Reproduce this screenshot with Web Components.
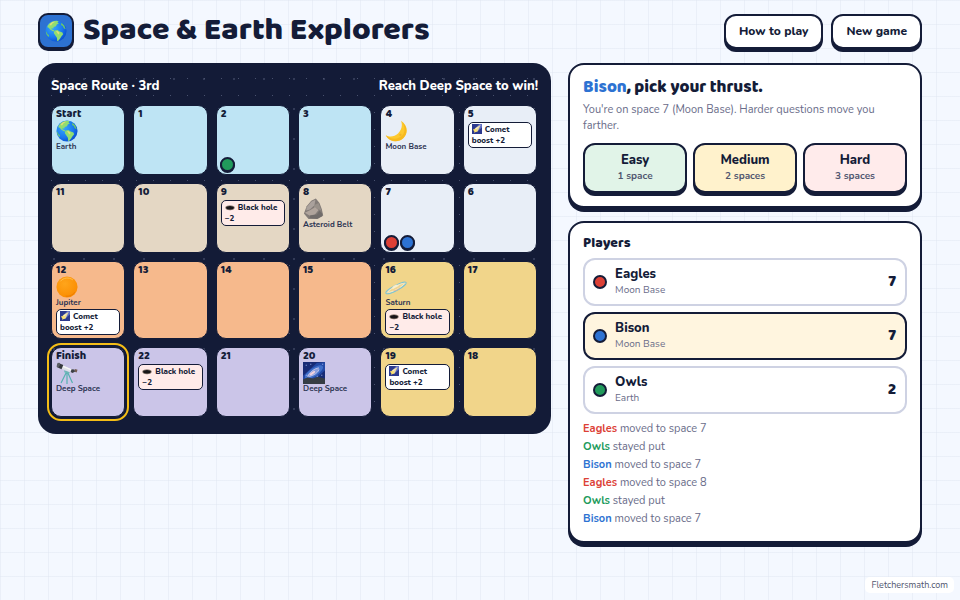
<!DOCTYPE html>
<html lang="en">
<head>
<meta charset="utf-8">
<meta name="viewport" content="width=device-width, initial-scale=1">
<title>Space &amp; Earth Explorers</title>
<style>
  :root {
    --ink: #141c38; --muted: #696c89; --line: #ced2e3;
    --red: #dc4036; --blue: #2d72d2; --green: #219a5b;
    --display: "Baloo 2", "Noto Sans", sans-serif;
    --body: Nunito, Lato, sans-serif;
  }
  body {
    margin: 0; min-height: 100vh; color: var(--ink); font-family: var(--body);
    background:
      linear-gradient(#dfe6f177 1px, transparent 1px) 0 0 / 24px 24px,
      linear-gradient(90deg, #dfe6f177 1px, transparent 1px) 0 0 / 24px 24px,
      #f4f8ff;
  }
</style>
</head>
<body>
<explorer-game></explorer-game>
<script>
const define = (name, html, setup) => {
  const template = document.createElement('template');
  template.innerHTML = `<style>*{box-sizing:border-box}:host{display:block;box-sizing:border-box}</style>${html}`;
  customElements.define(name, class extends HTMLElement {
    constructor() {
      super();
      this.attachShadow({ mode: 'open' }).append(template.content.cloneNode(true));
    }
    connectedCallback() { if (setup) setup(this, this.shadowRoot); }
  });
};

const art = {
  earth: `<defs><radialGradient id="e" cx=".35" cy=".35" r=".7"><stop offset="0" stop-color="#35a8fb"/><stop offset=".65" stop-color="#1a78ee"/><stop offset="1" stop-color="#0a4fd0"/></radialGradient></defs>
    <circle cx="12" cy="12" r="11.5" fill="url(#e)"/>
    <path fill="#8fdd72" d="M3 6C5 2.500 9 .6 13 .7l2 .8-1.500 1 1.500 1.200-2.200 1.200-.8 2-2.500.8-.5 1.500-2-.3.3 1.500 2 .4 1 1.600-1.500-.2L6 10.500 4 8.500 2.500 8zM10.500 11.500l3-.5 2.500 1.600 3 1 .8 1.900-2 2.500-1.300 2.300-2.200 2.500h-1l-.3-3.500-1.700-2.500-1.800-2.500z"/>
    <path fill="#e4dd75" d="M5 4.500l3-2.200 3-.4-3 2-1.500 2.500zM12 12l2 .3 2 2-1.500 1.500z"/><path fill="#6dc767" d="M18 3l3 3 1.500 4-2-1-1-2.500-2-1zM1 12l1.500 3 2 2-.5 1.500C2 17 1 15 1 12z"/>`,
  moon: `<path fill="#fdc92f" d="M17.500.7c7 4.500 8.300 13.500 2.700 18.900-5.700 5.400-15.600 4.600-19.400-3.100 3.700 2.200 9.700 1.900 13.400-1.800C18 11 19.500 6.200 17.500.7z"/><path fill="#f4b015" d="M1 16.700c5.500 5.200 14.700 4.800 18.600-.9 2.800-4.200 1.700-9.500-.7-13.700 5.700 4.700 6 12.800 1.300 17.500C14.500 25.100 4.500 24.300 1 16.700z" opacity=".65"/><circle cx="16.800" cy="16.200" r="1.300" fill="#f1b629"/>`,
  rock: `<path fill="#837c78" d="M1 17l3-8L9 3l5-2.500 4 5L20.500 12l1.500 7-6 4H6z"/><path fill="#aaa19c" d="M4 10L9 4l4.500-2-1 6-5 4.500-4 1z"/><path fill="#989089" d="M12.500 7.500l4.500-2 3 8-4-1.500-4-1.500z"/><path fill="#b0a49c" d="M2 16l6-3 5-3 4 3-4 5-6 1z"/><path fill="#716c6a" d="M8 19l7-1 3-4 3 3 0 3-6 2.500-8-1z"/>`,
  jupiter: `<defs><radialGradient id="j" cx=".4" cy=".35" r=".7"><stop offset="0" stop-color="#ffa51b"/><stop offset="1" stop-color="#fb8c00"/></radialGradient></defs><circle cx="12" cy="12" r="11.500" fill="url(#j)"/><path d="M5 5.500C8 1.800 14 1 18 4" stroke="#ffc152" stroke-width="1" fill="none" stroke-linecap="round"/><path d="M20.500 17.500c-2 3.500-6 5-10 4.500" stroke="#ec7b00" stroke-width="1" fill="none"/>`,
  saturn: `<g transform="rotate(-28 12 13)"><ellipse cx="12" cy="13" rx="12.500" ry="2.800" fill="#f0deb0" stroke="#7dc4d2" stroke-width="1"/><ellipse cx="12" cy="13" rx="9.500" ry="1.700" fill="#f1d58a" stroke="#f3ead0" stroke-width=".8"/><path d="M8 12.500c0-3.500 7.500-3.500 8 0z" fill="#f8edd0"/><path d="M7.800 14c2.500 1.400 6 1.400 8.400 0-1.500 3-6.500 3-8.400 0z" fill="#f2b193"/><path d="M1 14.500c3 2 18 2 22-.2" fill="none" stroke="#7dc4d2" stroke-width=".8"/></g>`,
  telescope: `<path d="M11.500 11L5.500 23M12.500 11l5.500 12M12 11v13" stroke="#55b1b1" stroke-width="1.300"/><path d="M9 9l6 2.200-1 2-5-2z" fill="#6bb7b7"/><path d="M7 3.500l10 4.500-1.500 3L5 7z" fill="#dfe2e8"/><path d="M7 3.500l10 4.500-.5 1.300L6 5z" fill="#f7f7f7"/><path d="M2 .8l6 2.500L6 8 .8 5.500z" fill="#36393e"/><ellipse cx="2.600" cy="3.300" rx="1.600" ry="2.600" transform="rotate(24 2.600 3.300)" fill="#5b5f66"/><path d="M17 8l3 .3 1 2-3 1.700-2-1z" fill="#3c4045"/><path d="M20.500 7.500l3 1-1 3-2-.8z" fill="#745c51"/>`,
  galaxy: `<path fill="#172b75" d="M0 0h24v24H0z"/><path fill="#2349a5" d="M0 15L15 1l9-1v9L10 22H0z"/><g transform="rotate(-34 12 11)"><ellipse cx="12" cy="11" rx="11.500" ry="4.500" fill="#3f6fc9"/><ellipse cx="11" cy="11" rx="8" ry="2.500" fill="#8c9fdc"/><path d="M4 11q8-4 15-1M5 12q8 3 13 0" fill="none" stroke="#c9c9ee" stroke-width=".8"/><ellipse cx="10" cy="11" rx="3.500" ry="1.200" fill="#f3d2dc"/></g><path fill="#353c44" d="M0 19l5-2 6 1 5-2 8 2v6H0z"/><path fill="#a9c0f7" d="M3 3h1v1H3zM8 2h1v1H8zM20 14h1v1h-1zM3 14h1v1H3zM15 15h1v1h-1zM21 2h1v1h-1z"/>`,
  comet: `<path fill="#2c398e" d="M0 0h24v24H0z"/><path fill="#6270c5" d="M24 0v8L13 18 6 13 17 0z"/><path fill="#e8d7a1" d="M21 2L14 17l-6 2-3-3 2-6z"/><path fill="#ffe26b" d="M4 12l4 1 4-3-1 5 3 3-5 .5-3 3-.5-4.500-3-2.500z"/><path fill="#fff8cb" d="M18 5l-7 7-2-1z"/>`,
  hole: `<ellipse cx="12" cy="14" rx="11" ry="5.500" fill="#74655c"/><ellipse cx="12" cy="13" rx="10.500" ry="4.500" fill="#ad9b8f"/><ellipse cx="12" cy="13.800" rx="9.500" ry="4" fill="#171518"/>`
};

define('sky-icon', `<style>:host{width:var(--icon-size,22px);height:var(--icon-size,22px)}svg{display:block;width:100%;height:100%}</style><span></span>`, (el, root) => {
  root.querySelector('span').innerHTML = `<svg viewBox="0 0 24 24" aria-hidden="true">${art[el.getAttribute('name')]}</svg>`;
});

define('event-chip', `<style>
  :host{margin-top:2px;border:1px solid var(--ink);border-radius:5px;padding:1px 3px;background:#fff;font-size:8px;line-height:11px;font-weight:800}
  :host([kind=hole]){background:#ffebe9}
  sky-icon{display:inline-block;--icon-size:10px;vertical-align:-2px;margin-right:3px}
  </style><span></span><slot></slot>`, (el, root) => {
  root.querySelector('span').innerHTML = `<sky-icon name="${el.getAttribute('kind')}"></sky-icon>`;
});

define('team-token', `<style>
  :host{width:14px;height:14px;border:2px solid var(--ink);border-radius:50%;background:var(--red);flex:none}
  :host([team=Bison]){background:var(--blue)}:host([team=Owls]){background:var(--green)}
  :host([raised]){width:15px;height:15px;box-shadow:0 1px 0 var(--ink)}
  </style>`);

define('board-space', `<style>
  :host{position:relative;min-height:70px;border:1px solid #131b37;border-radius:10px;background:var(--zone);padding:3px 4px}
  b{display:block;font:800 11px/11px var(--display)}
  small{display:block;font-size:8px;line-height:9px;font-weight:700;color:#2c3453}
  .tokens{position:absolute;left:3px;bottom:2px;display:flex;gap:1px}
  :host([finish]){outline:2px solid #f4bd16;outline-offset:2px}
  </style><b></b><div class="place"></div><slot></slot><div class="tokens"><slot name="token"></slot></div>`, (el, root) => {
  root.querySelector('b').textContent = el.getAttribute('label');
  const place = el.getAttribute('place');
  if (place) root.querySelector('.place').innerHTML = `<sky-icon name="${el.getAttribute('icon')}"></sky-icon><small>${place}</small>`;
});

const zones = { earth: '#bee4f4', moon: '#e8eef7', rock: '#e4d7c4', jup: '#f6b98c', sat: '#f1d58a', deep: '#cbc5e8' };
const C = '<event-chip kind="comet">Comet boost +2</event-chip>', H = '<event-chip kind="hole">Black hole −2</event-chip>';
const token = t => `<team-token slot="token" team="${t}" raised></team-token>`;
const spaces = [
  ['Start','earth','earth','Earth'],['1','earth'],['2','earth','','',token('Owls')],['3','earth'],['4','moon','moon','Moon Base'],['5','moon','','',C],
  ['11','rock'],['10','rock'],['9','rock','','',H],['8','rock','rock','Asteroid Belt'],['7','moon','','',token('Eagles')+token('Bison')],['6','moon'],
  ['12','jup','jupiter','Jupiter',C],['13','jup'],['14','jup'],['15','jup'],['16','sat','saturn','Saturn',H],['17','sat'],
  ['Finish','deep','telescope','Deep Space'],['22','deep','','',H],['21','deep'],['20','deep','galaxy','Deep Space'],['19','sat','','',C],['18','sat']
];

define('route-board', `<style>
  :host{border-radius:18px;padding:14px 13px 17px;
    background:
      radial-gradient(circle,#48516e 0 .5px,transparent 1px) 9px 10px/17px 17px content-box,
      radial-gradient(circle,#48516e 0 .5px,transparent 1px) 18px 17px/30px 30px content-box,
      #131b37}
  header{display:flex;justify-content:space-between;color:#fff;font-size:13px;line-height:18px;font-weight:800;margin-bottom:10px}
  .grid{display:grid;grid-template-columns:repeat(6,minmax(0,1fr));gap:8px;margin-right:1px}
  </style><header><span>Space Route · 3rd</span><span>Reach Deep Space to win!</span></header><div class="grid"></div>`, (el, root) => {
  root.querySelector('.grid').innerHTML = spaces.map(([n, z, icon, place, extra]) =>
    `<board-space label="${n}" style="--zone:${zones[z]}" ${place ? `icon="${icon}" place="${place}"` : ''} ${n === 'Finish' ? 'finish' : ''}>${extra || ''}</board-space>`).join('');
});

define('game-header', `<style>
  :host{display:flex;align-items:center;gap:9px}
  .logo{width:36px;height:36px;border:2px solid var(--ink);border-radius:10px;background:#2d72d2;display:grid;place-items:center;box-shadow:0 2px 0 var(--ink)}
  h1{margin:0;font:800 32px/36px var(--display);flex:1}
  nav{display:flex;gap:8px}
  button{height:35px;padding:0 13px;border:2px solid var(--ink);border-radius:12px;background:#fff;color:var(--ink);font:800 12px/18px var(--body);box-shadow:0 3px 0 var(--ink)}
  </style><div class="logo"><sky-icon name="earth"></sky-icon></div><h1>Space &amp; Earth Explorers</h1>
  <nav><button type="button">How to play</button><button type="button">New game</button></nav>`);

define('game-card', `<style>:host{border:2px solid var(--ink);border-radius:16px;background:#fff;padding:13px;box-shadow:0 4px 0 var(--ink)}</style><slot></slot>`);

define('thrust-picker', `<style>
  h2{margin:0;font:800 17px/20px var(--display)} h2 span{color:var(--blue)}
  p{margin:4px 0 9px;font-size:11px;line-height:16px;color:var(--muted)}
  div{display:grid;grid-template-columns:repeat(3,1fr);gap:6px}
  button{height:50px;padding:0;border:2px solid var(--ink);border-radius:12px;color:var(--ink);font:800 13px/16px var(--body);box-shadow:0 3px 0 var(--ink)}
  small{display:block;font-size:10px;line-height:16px;font-weight:700;color:#50566f}
  .easy{background:#e1f4e8}.medium{background:#fff2cc}.hard{background:#ffebeb}
  </style><game-card><h2><span>Bison</span>, pick your thrust.</h2><p>You're on space 7 (Moon Base). Harder questions move you farther.</p>
  <div><button type="button" class="easy">Easy<small>1 space</small></button><button type="button" class="medium">Medium<small>2 spaces</small></button><button type="button" class="hard">Hard<small>3 spaces</small></button></div></game-card>`);

define('player-row', `<style>
  :host{display:flex;align-items:center;gap:8px;height:48px;padding:0 9px 0 8px;border:2px solid var(--line);border-radius:12px}
  :host([active]){border-color:var(--ink);background:#fff5df}
  .name{flex:1;font-size:13px;line-height:17px;font-weight:800}
  small{display:block;font-size:10px;line-height:15px;font-weight:400;color:var(--muted)}
  strong{font:800 16px/20px var(--display)}
  </style><span class="dot"></span><div class="name"></div><strong></strong>`, (el, root) => {
  const team = el.getAttribute('team');
  root.querySelector('.dot').innerHTML = `<team-token team="${team}"></team-token>`;
  root.querySelector('.name').innerHTML = `${team}<small>${el.getAttribute('place')}</small>`;
  root.querySelector('strong').textContent = el.getAttribute('space');
});

define('player-panel', `<style>
  h2{margin:0 0 8px;font:800 14px/14px var(--display)}
  .rows{display:grid;gap:6px}
  ul{list-style:none;margin:6px 0 0;padding:0;font-size:11px;line-height:18px;color:var(--muted)}
  .red{color:var(--red)}.blue{color:var(--blue)}.green{color:var(--green)}
  </style><game-card><h2>Players</h2><div class="rows">
  <player-row team="Eagles" place="Moon Base" space="7"></player-row>
  <player-row team="Bison" place="Moon Base" space="7" active></player-row>
  <player-row team="Owls" place="Earth" space="2"></player-row></div>
  <ul><li><b class="red">Eagles</b> moved to space 7</li><li><b class="green">Owls</b> stayed put</li><li><b class="blue">Bison</b> moved to space 7</li>
  <li><b class="red">Eagles</b> moved to space 8</li><li><b class="green">Owls</b> stayed put</li><li><b class="blue">Bison</b> moved to space 7</li></ul></game-card>`);

define('explorer-game', `<style>
  :host{padding:13px 38px}
  main{display:grid;grid-template-columns:minmax(0,145fr) minmax(0,100fr);gap:17px;align-items:start;margin-top:14px}
  aside{display:grid;gap:13px}
  footer{position:fixed;right:6px;bottom:7px;padding:0 6px;border-radius:5px;background:#fff;color:#50566f;font-size:9px;line-height:16px}
  </style><game-header></game-header><main><route-board></route-board><aside><thrust-picker></thrust-picker><player-panel></player-panel></aside></main><footer>Fletchersmath.com</footer>`);
</script>
</body>
</html>
